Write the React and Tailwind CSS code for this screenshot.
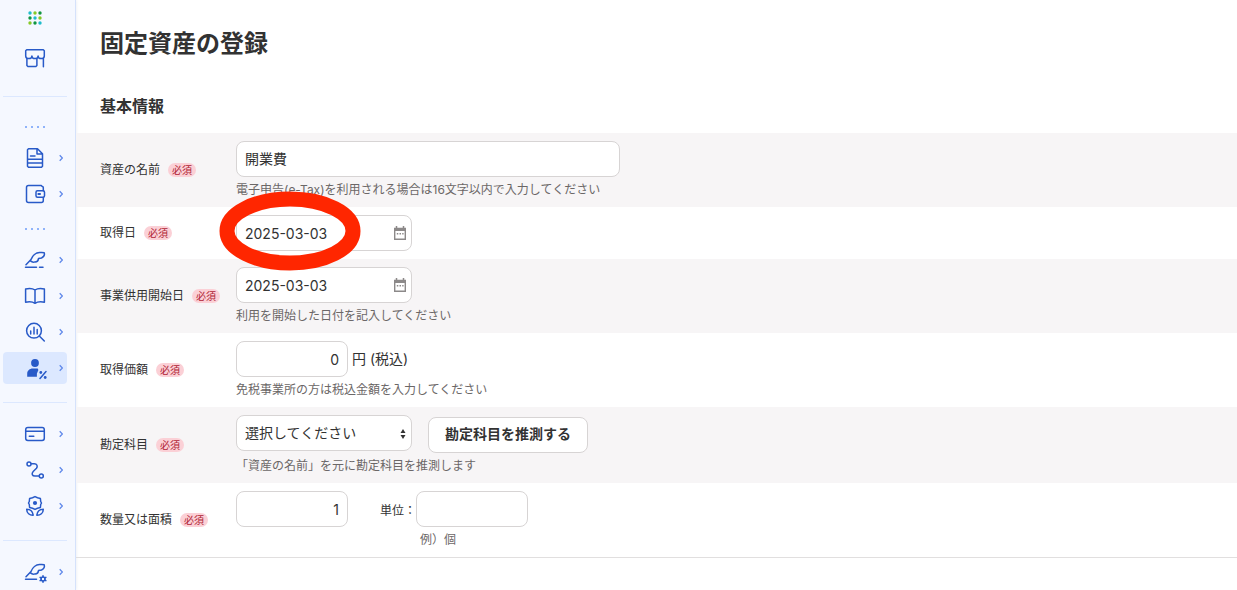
import { useState } from 'react';

const FEATHER =
  'M3 16.700 8 11.500C9.500 7.500 13 4.500 16.500 4.500c1.500 0 3 .2 4.700.2.6 2-.6 4.300-2.700 5.300l-3 .6c-.2 2.400-2 3.400-3.700 3.300-1.500.6-3 .2-4.300-1';

const icons = {
  store: (
    <>
      <path d="M3.700 3.700h16.600l1 1V10a3.100 2.600 0 0 1-6.200 0 3.100 2.600 0 0 1-6.200 0 3.100 2.600 0 0 1-6.200 0V4.700z" />
      <path d="M3.900 12.500v7l1 1h8l1-1v-7M20.400 12.500v8.200" />
    </>
  ),
  document: (
    <>
      <path d="M5.500 2.700h9l5 5v12.600l-1 1h-13l-1-1V3.700zM14 3v5h5.500" />
      <path d="M7.500 10h4.500M5 13.300h14M5 17h14" />
    </>
  ),
  wallet: (
    <>
      <path d="M20.300 8.700V5.500q0-1-1-1l-1-.9H5.500q-2 0-2 2v12.800q0 2 2 2h12.800q2 0 2-2v-3" />
      <rect x="13" y="8.700" width="8.500" height="6.600" rx="1.500" />
      <path d="M15.300 12h1.800" strokeWidth="1.800" />
    </>
  ),
  pen: (
    <>
      <path d={FEATHER} />
      <path d="M2.500 19.200h11M16.500 19.200H20" />
    </>
  ),
  book: (
    <path d="M12 6C9.500 4.300 6 4.300 2.600 5v13.200c3.400-.6 6.900-.6 9.400 1.100 2.500-1.700 6-1.700 9.400-1.100V5C18 4.300 14.500 4.300 12 6zv13" />
  ),
  report: (
    <>
      <circle cx="11" cy="10.700" r="7.400" />
      <path d="m16.300 16 5 5M7.700 11v3M11 7.300V14M14.200 9.500V14" />
    </>
  ),
  tax: (
    <>
      <circle cx="12" cy="7" r="3.900" fill="currentColor" stroke="none" />
      <path d="M4.200 20.700v-3c0-3 2.500-5.200 5.500-5.200h5l.7 1.500-1.500 3.500v3.200z" fill="currentColor" stroke="none" />
      <path d="m17 22.500 6-7" />
      <circle cx="17.800" cy="16.500" r="1.400" fill="currentColor" stroke="none" />
      <circle cx="22.200" cy="21.500" r="1.400" fill="currentColor" stroke="none" />
    </>
  ),
  card: (
    <>
      <rect x="2.700" y="5.500" width="18.600" height="13" rx="2.200" />
      <path d="M3 9.300h18M6.300 14.300h4.500" />
    </>
  ),
  route: (
    <>
      <circle cx="6" cy="6" r="2" />
      <circle cx="18.300" cy="18" r="2" />
      <path d="M8.300 5.800h3c2.700 0 3.700 2.500 2.200 4.500l-3.300 3.200c-2 2.300-1 4.500 1.800 4.500h4" />
    </>
  ),
  flower: (
    <>
      <path d="m12 2.600 2.500 1.200 2.900.7.300 3 .8 1.500-.8 1.500-.3 3-2.900.7L12 15.400l-2.500-1.200-2.900-.7-.3-3L5.500 9l.8-1.500.3-3 2.900-.7z" />
      <circle cx="12" cy="9" r="2.100" fill="currentColor" stroke="none" />
      <path d="M3.700 15.200c3.500 0 6 2 6.500 6-3.600.2-6.500-2-6.500-6zM20.300 15.200c-3.500 0-6 2-6.500 6 3.600.2 6.500-2 6.500-6z" />
    </>
  ),
  settings: (
    <>
      <path d={FEATHER} />
      <path d="M2.500 19.200h11" />
      <circle cx="20" cy="19" r="2" />
      <path d="M20 15.700V17M20 21v1.300M17.100 17.300l1.200.7M21.700 20l1.200.7M17.100 20.700l1.200-.7M21.700 18l1.200-.7" />
    </>
  ),
};

const groups = [
  [
    { icon: 'document', label: '請求書' },
    { icon: 'wallet', label: '支払' },
  ],
  [
    { icon: 'pen', label: '取引' },
    { icon: 'book', label: '帳簿' },
    { icon: 'report', label: 'レポート' },
    { icon: 'tax', label: '確定申告', active: true },
  ],
  [
    { icon: 'card', label: '口座' },
    { icon: 'route', label: '連携' },
    { icon: 'flower', label: '開業' },
  ],
  [{ icon: 'settings', label: '設定' }],
];

const appDots = [
  '#1fbccb', '#86c926', '#0f9541',
  '#0f9541', '#1fbccb', '#86c926',
  '#86c926', '#0f9541', '#1fbccb',
];

const inputClass = 'h-9 rounded-lg border border-[#d7d4d4] bg-white px-2 text-sm text-[#323232] outline-none';

function NavIcon({ name }) {
  return (
    <svg
      viewBox="0 0 24 24"
      className="h-6 w-6 shrink-0 fill-none stroke-current text-[#285ac8]"
      strokeWidth="1.500"
      strokeLinecap="round"
      strokeLinejoin="round">
      {icons[name]}
    </svg>
  );
}

function NavItem({ icon, label, active, arrow = true }) {
  return (
    <a
      href="#"
      aria-label={label}
      className={`flex h-8 items-center gap-3 rounded pl-5 ${active ? 'bg-[#dce8ff]' : ''}`}>
      <NavIcon name={icon} />
      {arrow && (
        <svg viewBox="0 0 4 8" className="h-2 w-1 fill-none stroke-[#5f88ea]" strokeWidth="1.300">
          <path d="m.7 1.300 2.700 2.700L.7 6.700" />
        </svg>
      )}
    </a>
  );
}

function NavGroup({ items }) {
  return (
    <div className="flex flex-col gap-1">
      {items.map((item) => (
        <NavItem key={item.icon} {...item} />
      ))}
    </div>
  );
}

function NavDots() {
  return (
    <div className="flex justify-center gap-1 pt-px">
      {[0, 1, 2, 3].map((n) => (
        <span key={n} className="h-0.5 w-0.5 bg-[#8fb3fa]" />
      ))}
    </div>
  );
}

function Sidebar() {
  return (
    <nav className="flex w-[76px] shrink-0 flex-col border-r border-[#d5e2fb] bg-[#f5f8ff] pr-2 pl-[3px] shadow-[0_0_3px_rgba(40,60,120,0.12)]">
      <button type="button" aria-label="アプリ一覧" className="flex h-9 items-center justify-center">
        <svg viewBox="0 0 14 14" className="h-3.5 w-3.5">
          {appDots.map((color, i) => (
            <circle key={i} cx={2 + (i % 3) * 5} cy={2 + Math.floor(i / 3) * 5} r="1.700" fill={color} />
          ))}
        </svg>
      </button>
      <div className="mt-1.5">
        <NavItem icon="store" label="ホーム" arrow={false} />
      </div>
      <hr className="mt-[22px] mb-7 border-[#dce8ff]" />
      <NavDots />
      <div className="mt-3.5 mb-[17px]">
        <NavGroup items={groups[0]} />
      </div>
      <NavDots />
      <div className="mt-3.5">
        <NavGroup items={groups[1]} />
      </div>
      <hr className="mt-[18px] mb-[15px] border-[#dce8ff]" />
      <NavGroup items={groups[2]} />
      <hr className="mt-[18px] mb-[15px] border-[#dce8ff]" />
      <NavGroup items={groups[3]} />
    </nav>
  );
}

function Row({ id, label, shaded, children }) {
  return (
    <div className={`grid grid-cols-[136px_minmax(0,1fr)] items-center px-6 py-2 ${shaded ? 'bg-[#f7f5f6]' : ''}`}>
      <div className="flex items-center gap-2">
        <label htmlFor={id} className="text-xs whitespace-nowrap">
          {label}
        </label>
        <span className="h-3.5 rounded-full bg-[#fbd0d6] px-1 text-[10px] leading-3.5 whitespace-nowrap text-[#b01e35]">
          必須
        </span>
      </div>
      <div>{children}</div>
    </div>
  );
}

function Help({ children }) {
  return <p className="pt-1 text-xs leading-[18px] text-[#6b6767]">{children}</p>;
}

function DateField({ id, marked }) {
  const [value, setValue] = useState('2025-03-03');

  return (
    <div className="relative w-44">
      <div className="flex h-9 items-center rounded-lg border border-[#d7d4d4] bg-white pr-1">
        <input
          id={id}
          type="text"
          value={value}
          onChange={(e) => setValue(e.target.value)}
          className="h-full min-w-0 flex-1 bg-transparent pl-2 text-sm outline-none"
        />
        <button type="button" aria-label="カレンダーを開く">
          <svg viewBox="0 0 14 16" className="h-4 w-3.5 fill-none stroke-[#8c8989]">
            <path d="M1.700 3.500h10.600v10.800H1.700z" strokeWidth="1.400" />
            <path d="M1 4.500h12" strokeWidth="3" />
            <path d="M3.500 1v3M10.500 1v3" strokeWidth="1.500" />
            <path d="M3.800 8.700h6.800" strokeWidth="1.500" strokeDasharray="1.500 1.200" />
          </svg>
        </button>
      </div>
      {marked && (
        <svg viewBox="0 0 142 80" className="pointer-events-none absolute -top-6 -left-[17px] z-10 h-20 w-[142px] fill-none">
          <ellipse cx="71" cy="40" rx="63" ry="32" stroke="#ff2600" strokeWidth="15" />
        </svg>
      )}
    </div>
  );
}

export default function App() {
  return (
    <div className="flex min-h-screen bg-white font-['Inter','Noto_Sans_CJK_JP',sans-serif] text-[#323232]">
      <Sidebar />

      <main className="min-w-0 flex-1">
        <h1 className="px-6 pt-[26px] text-2xl leading-9 font-bold">固定資産の登録</h1>
        <h2 className="px-6 pt-8 pb-[15px] text-base leading-6 font-bold">基本情報</h2>

        <form className="border-b border-[#e1dfdf]">
          <Row id="asset-name" label="資産の名前" shaded>
            <input id="asset-name" type="text" defaultValue="開業費" className={`${inputClass} block w-96 pb-0.5`} />
            <Help>電子申告(e-Tax)を利用される場合は16文字以内で入力してください</Help>
          </Row>

          <Row id="acquired-on" label="取得日">
            <DateField id="acquired-on" marked />
          </Row>

          <Row id="started-on" label="事業供用開始日" shaded>
            <DateField id="started-on" />
            <Help>利用を開始した日付を記入してください</Help>
          </Row>

          <Row id="price" label="取得価額">
            <div className="flex items-center gap-1">
              <input id="price" type="text" defaultValue="0" className={`${inputClass} w-28 text-right`} />
              <span className="text-sm">円 (税込)</span>
            </div>
            <Help>免税事業所の方は税込金額を入力してください</Help>
          </Row>

          <Row id="account" label="勘定科目" shaded>
            <div className="flex items-start gap-4">
              <div className="relative w-44">
                <select id="account" className={`${inputClass} w-full appearance-none`}>
                  <option>選択してください</option>
                </select>
                <svg viewBox="0 0 6 10" className="pointer-events-none absolute top-3.5 right-1.5 h-2.5 w-1.5 fill-[#323232]">
                  <path d="M3 0 5.500 4h-5zM3 10 .5 6h5z" />
                </svg>
              </div>
              <button
                type="button"
                className="mt-0.5 h-9 rounded-lg border border-[#d7d4d4] bg-white px-4 pb-0.5 text-sm font-bold">
                勘定科目を推測する
              </button>
            </div>
            <Help>「資産の名前」を元に勘定科目を推測します</Help>
          </Row>

          <Row id="quantity" label="数量又は面積">
            <div className="flex items-start gap-8">
              <input id="quantity" type="text" defaultValue="1" className={`${inputClass} w-28 text-right`} />
              <div className="flex items-start">
                <label htmlFor="unit" className="text-xs leading-10">
                  単位：
                </label>
                <div>
                  <input id="unit" type="text" className={`${inputClass} block w-28`} />
                  <div className="pl-1">
                    <Help>例）個</Help>
                  </div>
                </div>
              </div>
            </div>
          </Row>
        </form>
      </main>
    </div>
  );
}
